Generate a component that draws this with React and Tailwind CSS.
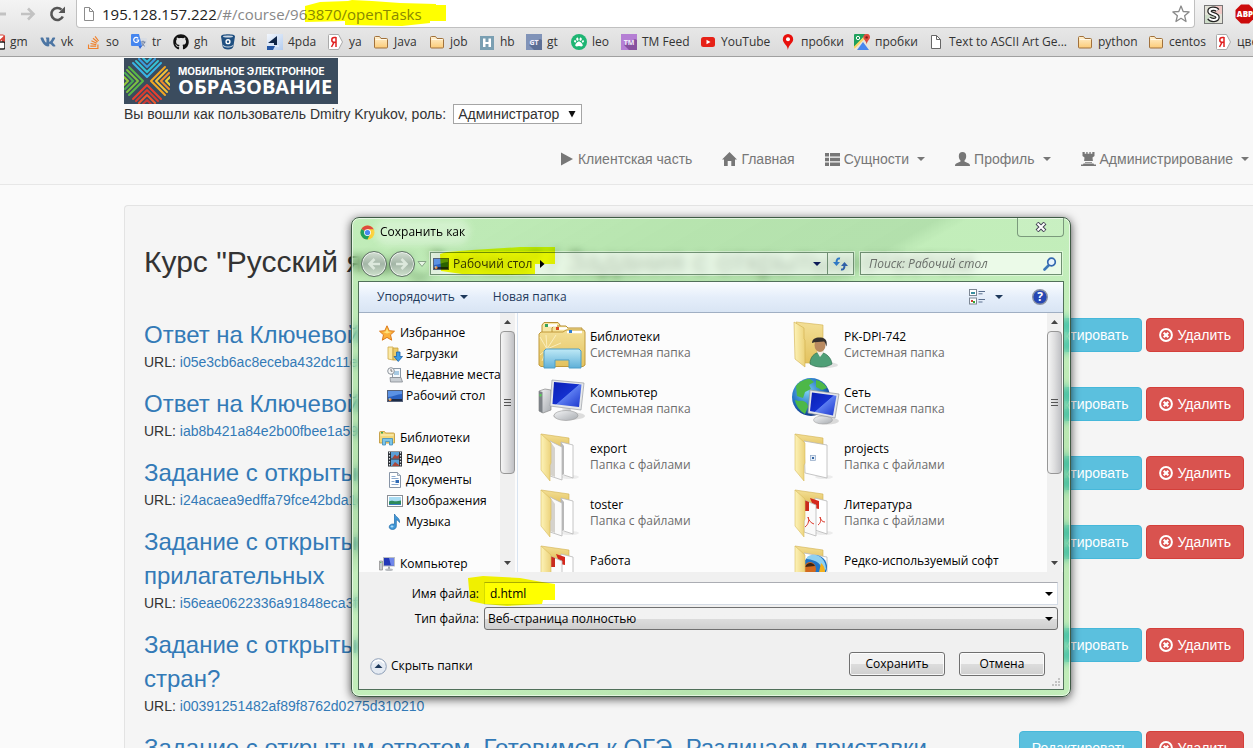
import React from 'react';
import { FaVk, FaStackOverflow, FaGithub, FaPaw } from 'react-icons/fa';

const UI = "font-['Open_Sans','Noto_Sans',sans-serif]";
const ARIAL = "font-['Liberation_Sans',Arial,sans-serif]";

/* ---------- bookmark icons ---------- */

const Gmail = () => (
  <svg width="16" height="16" viewBox="0 0 16 16">
    <rect x="0" y="1" width="15" height="11" rx="1" fill="#fff" stroke="#d8453a" />
    <path d="M0 1l8 7 8-7v11h-3V6L8 10 3 6v6H0z" fill="#d8453a" />
    <rect x="9" y="8" width="7" height="7" rx="1.5" fill="#fff" stroke="#222" strokeWidth="1.5" />
  </svg>
);

const Translate = () => (
  <svg width="16" height="16" viewBox="0 0 16 16">
    <path d="M6 4h9a1 1 0 0 1 1 1v9a1 1 0 0 1-1 1H9z" fill="#d9dde3" />
    <path d="M9.5 8h5M12 6.7V8m1.7 0c-.6 2-2 3.400-3.500 4.300M10.800 9c.7 1.500 1.800 2.500 3 3.200" stroke="#6c7ea0" fill="none" />
    <path d="M1 0h7l3 12H1a1 1 0 0 1-1-1V1a1 1 0 0 1 1-1z" fill="#4686ef" />
    <path d="M7.200 4.400A2.500 2.500 0 1 0 7.700 6H5.400" stroke="#fff" strokeWidth="1.200" fill="none" />
    <path d="M9 15l2-3H7.500z" fill="#3367d6" />
  </svg>
);

const Bucket = () => (
  <svg width="16" height="16" viewBox="0 0 16 16">
    <path d="M1 2.500C1 1 4 .3 8 .3s7 .7 7 2.200l-1.700 10.300c-.3 1.600-2.600 2.700-5.300 2.700s-5-1.100-5.300-2.700z" fill="#205081" />
    <ellipse cx="8" cy="2.600" rx="5" ry="1" fill="#c9d6e4" />
    <circle cx="8" cy="7.700" r="2.600" fill="#fff" />
    <circle cx="8" cy="7.700" r="1.200" fill="#205081" />
    <path d="M3 11.500c2.500 2 7.500 2 10 0" stroke="#fff" strokeWidth=".8" fill="none" />
  </svg>
);

const FourPda = () => (
  <svg width="16" height="16" viewBox="0 0 16 16">
    <defs>
      <linearGradient id="pda" x1="0" x2="1" y1="0" y2="1">
        <stop offset="0" stopColor="#f3f7fd" />
        <stop offset="1" stopColor="#b4cdf0" />
      </linearGradient>
    </defs>
    <rect width="16" height="16" fill="url(#pda)" />
    <path d="M10 2v9H7V9H1z" fill="#0f2547" />
    <path d="M0 11h12v2H0z" fill="#dbe8fa" />
    <path d="M0 12h8l-2 4H0z" fill="#2456a4" />
  </svg>
);

const Yandex = () => (
  <svg width="16" height="16" viewBox="0 0 16 16">
    <path d="M1.500.5h9l4 7.500-4 7.500h-9a1 1 0 0 1-1-1v-13a1 1 0 0 1 1-1z" fill="#fff" stroke="#aaa" />
    <path d="M8 3v10M8 3.500H6.200C3 3.500 3 8.300 6.200 8.300H8M6 8.300L3.500 13" fill="none" stroke="#e02020" strokeWidth="1.500" />
  </svg>
);

const Folder = () => (
  <svg width="16" height="16" viewBox="0 0 16 16">
    <defs>
      <linearGradient id="fold" x1="0" x2="0" y1="0" y2="1">
        <stop offset="0" stopColor="#fff0cf" />
        <stop offset="1" stopColor="#fccb77" />
      </linearGradient>
    </defs>
    <path d="M1.500 13V3.500a1 1 0 0 1 1-1h4l1.500 2h5.500a1 1 0 0 1 1 1V13a1 1 0 0 1-1 1h-11a1 1 0 0 1-1-1z" fill="url(#fold)" stroke="#a1713c" />
    <path d="M2.500 5.500h11" stroke="#fff8e6" />
  </svg>
);

const Habr = () => (
  <svg width="16" height="16" viewBox="0 0 16 16">
    <rect x="1" y="2" width="14" height="14" fill="#7a9fb2" />
    <path d="M4 4.500h2.500V8h3V4.500H12V13H9.500v-3h-3v3H4z" fill="#fff" />
  </svg>
);

const LetterTile = ({ text, front, back }) => (
  <svg width="16" height="16" viewBox="0 0 16 16">
    <rect width="16" height="16" fill={front} />
    <path d="M3 11l5 5h8V6l-2-1z" fill={back} />
    <text x="8" y="10.500" textAnchor="middle" fontSize="7" fontWeight="700" fontFamily="Open Sans" fill="#f2eefb">{text}</text>
  </svg>
);

const Leo = () => (
  <span className="flex size-4 items-center justify-center rounded-full bg-[#1eb573]">
    <FaPaw size={10} color="#fff" />
  </span>
);

const YouTube = () => (
  <svg width="16" height="16" viewBox="0 0 16 16">
    <rect x="1" y="3" width="14" height="10" rx="2.500" fill="#e62117" />
    <path d="M6.500 5.700v4.600l4-2.300z" fill="#fff" />
  </svg>
);

const Pin = () => (
  <svg width="16" height="16" viewBox="0 0 16 16">
    <path d="M8 0a5.200 5.200 0 0 1 5.200 5.200C13.200 9 9 10 7.800 16 7.800 11 2.800 9.500 2.800 5.200A5.200 5.200 0 0 1 8 0z" fill="#e8100c" />
    <circle cx="8" cy="5.200" r="2" fill="#fff" />
  </svg>
);

const Maps = () => (
  <svg width="16" height="16" viewBox="0 0 16 16">
    <rect width="16" height="16" rx="1" fill="#e9e5dc" />
    <path d="M0 1a1 1 0 0 1 1-1h11L0 14z" fill="#1fa15d" />
    <path d="M0 14L14 0" stroke="#fdd663" strokeWidth="2" />
    <path d="M3 16l6-8 6 8z" fill="#4a87ee" />
    <circle cx="4" cy="4" r="1.700" fill="none" stroke="#fff" />
    <path d="M12.500 0A3.300 3.300 0 0 1 16 3.300c0 2.400-2.700 3.200-3.300 7.200-.6-4-3.400-4.800-3.400-7.200A3.300 3.300 0 0 1 12.500 0z" fill="#dd4b3e" />
    <circle cx="12.600" cy="3.400" r="1.200" fill="#7c1f16" />
  </svg>
);

const Page = ({ stroke = '#666' }) => (
  <svg width="16" height="16" viewBox="0 0 16 16">
    <path d="M3.500 1.500h5l4 4v9h-9z" fill="#fff" stroke={stroke} />
    <path d="M8.500 1.500v4h4" fill="none" stroke={stroke} />
  </svg>
);

const bookmarks = [
  { label: 'gm', icon: <Gmail />, w: 'w-[51px]' },
  { label: 'vk', icon: <FaVk size={16} color="#4c75a3" />, w: 'w-[45px]' },
  { label: 'so', icon: <FaStackOverflow size={15} color="#f0812b" />, w: 'w-[46px]' },
  { label: 'tr', icon: <Translate />, w: 'w-[42px]' },
  { label: 'gh', icon: <FaGithub size={16} color="#111" />, w: 'w-[47px]' },
  { label: 'bit', icon: <Bucket />, w: 'w-[47px]' },
  { label: '4pda', icon: <FourPda />, w: 'w-[61px]' },
  { label: 'ya', icon: <Yandex />, w: 'w-[45px]' },
  { label: 'Java', icon: <Folder />, w: 'w-[56px]' },
  { label: 'job', icon: <Folder />, w: 'w-[50px]' },
  { label: 'hb', icon: <Habr />, w: 'w-[47px]' },
  { label: 'gt', icon: <LetterTile text="GT" front="#8093b8" back="#5d6f95" />, w: 'w-[45px]' },
  { label: 'leo', icon: <Leo />, w: 'w-[50px]' },
  { label: 'TM Feed', icon: <LetterTile text="TM" front="#b57fd4" back="#87519f" />, w: 'w-[79px]' },
  { label: 'YouTube', icon: <YouTube />, w: 'w-[80px]' },
  { label: 'пробки', icon: <Pin />, w: 'w-[74px]' },
  { label: 'пробки', icon: <Maps />, w: 'w-[74px]' },
  { label: 'Text to ASCII Art Ge...', icon: <Page />, w: 'w-[149px]' },
  { label: 'python', icon: <Folder />, w: 'w-[71px]' },
  { label: 'centos', icon: <Folder />, w: 'w-[68px]' },
  { label: 'цвета', icon: <Yandex />, w: 'w-[80px]' },
];

function BrowserChrome() {
  return (
    <div className={`${UI} shrink-0 border-b border-[#a0a0a0] bg-gradient-to-b from-[#f4f4f4] to-[#dadada]`}>
      <div className="flex h-7 items-stretch">
        <div className="flex w-19 shrink-0 items-center">
          <button type="button" aria-label="Назад" className="w-5">
            <svg width="20" height="16" viewBox="0 0 20 16"><path d="M-6 8H6" stroke="#c2c2c2" strokeWidth="3" /></svg>
          </button>
          <button type="button" aria-label="Вперёд" className="w-[29px]">
            <svg width="16" height="14" viewBox="0 0 16 14"><path d="M1 7h12M8 1.500L13.500 7 8 12.500" fill="none" stroke="#c2c2c2" strokeWidth="2.600" /></svg>
          </button>
          <button type="button" aria-label="Обновить" className="w-5">
            <svg width="18" height="16" viewBox="0 0 18 16">
              <path d="M13.800 10.500A6 6 0 1 1 12.500 3.600" fill="none" stroke="#555" strokeWidth="2.600" />
              <path d="M16 .5v6.500H9.500z" fill="#555" />
            </svg>
          </button>
        </div>
        <div className="flex min-w-0 flex-1 items-center rounded-b-sm border-x border-b border-[#c0c0c0] bg-white px-1">
          <Page stroke="#8c8c8c" />
          <div className="ml-[5px] flex-1 whitespace-nowrap text-[15px] leading-5 text-[#888]">
            <span className="text-[#222]">195.128.157.222</span>/#/course/963870/openTasks
          </div>
          <button type="button" aria-label="Добавить в закладки">
            <svg width="18" height="18" viewBox="0 0 18 18"><path d="M9 1l2.200 5.500 5.900.4-4.500 3.800 1.400 5.800L9 13.300l-5 3.200 1.400-5.800L.9 6.900l5.900-.4z" fill="#fff" stroke="#8a8a8a" strokeWidth="1.300" strokeLinejoin="round" /></svg>
          </button>
        </div>
        <div className="flex w-[58px] shrink-0 items-center gap-3 overflow-hidden pl-[9px]">
          <svg className="shrink-0" width="19" height="19" viewBox="0 0 19 19">
            <rect x=".5" y=".5" width="18" height="18" fill="#e3e3d8" stroke="#777" />
            <path d="M10 1h8v8h-8z" fill="#f0c9c6" />
            <path d="M1 10h8v8H1z" fill="#cddcc8" />
            <path d="M13.500 5.500C12 3 5.500 3 5.500 6.300c0 3.400 8 2.400 8 5.900 0 3.300-6.500 3.600-8.500.8" fill="none" stroke="#222" strokeWidth="4.500" />
            <path d="M13.500 5.500C12 3 5.500 3 5.500 6.300c0 3.400 8 2.400 8 5.900 0 3.300-6.500 3.600-8.500.8" fill="none" stroke="#fff" strokeWidth="2" />
          </svg>
          <svg className="shrink-0" width="20" height="20" viewBox="0 0 20 20">
            <path d="M6 .5h8L19.500 6v8L14 19.500H6L.5 14V6z" fill="#cc0b0b" />
            <text x="10" y="13" textAnchor="middle" fontSize="8" fontWeight="800" fontFamily="Open Sans" fill="#fff">ABP</text>
          </svg>
        </div>
      </div>
      <div className="-ml-[11px] flex h-7 items-center overflow-hidden text-[12px] leading-4 text-[#333]">
        {bookmarks.map((b, i) => (
          <a key={i} href="#" className={`${b.w} flex shrink-0 items-center gap-[5px] whitespace-nowrap`}>
            <span className="flex w-4 shrink-0 justify-center">{b.icon}</span>
            {b.label}
          </a>
        ))}
      </div>
    </div>
  );
}

/* ---------- page header ---------- */

const LogoMark = () => {
  const halves = [14, 11, 8, 4];
  const sides = [
    { r: 0, c: ['#38b6e8', '#34c3d6', '#3a9fe0', '#35b8d8'] },
    { r: 90, c: ['#f5a623', '#f3c13a', '#f08c2e', '#e8d23a'] },
    { r: 180, c: ['#e8402f', '#d83a30', '#f0582e', '#c93a36'] },
    { r: 270, c: ['#58b848', '#7cc242', '#4cae50', '#93c83d'] },
  ];
  return (
    <svg className="shrink-0" width="46" height="46" viewBox="0 0 46 46">
      {sides.map((s) => (
        <g key={s.r} transform={`rotate(${s.r} 23 23)`} fill="none" strokeWidth="2" strokeLinejoin="round" strokeLinecap="round">
          {halves.map((half, n) => {
            const y = 19 - n * 5;
            return <path key={n} d={`M${23 - half} ${y - half}L23 ${y}L${23 + half} ${y - half}`} stroke={s.c[n]} />;
          })}
        </g>
      ))}
    </svg>
  );
};

const Caret = () => (
  <svg className="ml-1" width="8" height="4" viewBox="0 0 8 4"><path d="M0 0h8L4 4z" fill="#777" /></svg>
);

const navItems = [
  { label: 'Клиентская часть', icon: <svg width="14" height="14" viewBox="0 0 14 14"><path d="M1 .5l12 6.500-12 6.500z" fill="#777" /></svg> },
  { label: 'Главная', icon: <svg width="15" height="14" viewBox="0 0 15 14"><path d="M7.500 0L15 7.500h-2V14H9.300V9H5.700v5H2V7.500H0z" fill="#777" /></svg> },
  { label: 'Сущности', caret: true, icon: <svg width="15" height="13" viewBox="0 0 15 13"><path d="M0 0h4v3.500H0zM5 0h10v3.500H5zM0 4.700h4v3.500H0zM5 4.700h10v3.500H5zM0 9.400h4v3.500H0zM5 9.400h10v3.500H5z" fill="#777" /></svg> },
  { label: 'Профиль', caret: true, icon: <svg width="15" height="14" viewBox="0 0 15 14"><path d="M7.500 0c2.300 0 3.700 1.600 3.700 4 0 1.900-.7 3.600-1.700 4.600v1l4.300 1.800c.9.400 1.200 1.400 1.200 2.600H0c0-1.200.3-2.200 1.200-2.600l4.300-1.800v-1C4.500 7.600 3.800 5.900 3.800 4 3.800 1.600 5.200 0 7.500 0z" fill="#777" /></svg> },
  { label: 'Администрирование', caret: true, icon: <svg width="15" height="14" viewBox="0 0 15 14"><path d="M1.500 0h2.200v1.800h1.600V0h1.300v1.800h1.800V0h1.300v1.800h1.600V0h2.200v4l-2 1.500.4 3.500H3.100l.4-3.500-2-1.500zM4 10h7v.8H4zM2.500 11.500h10l.5 1h2V14H0v-1.500h2z" fill="#777" /></svg> },
];

function SiteHeader() {
  return (
    <header className="shrink-0 border-b border-[#e7e7e7] bg-[#f8f8f8] pl-[124px]">
      <div className="pt-px">
        <a href="#" className="flex h-[46px] w-[214px] items-center bg-[#3b4c5e] text-white">
          <LogoMark />
          <span className="ml-2 flex flex-col whitespace-nowrap font-bold">
            <span className="font-['Inter',sans-serif] text-[10px] leading-3">МОБИЛЬНОЕ ЭЛЕКТРОННОЕ</span>
            <span className="font-['Open_Sans',sans-serif] text-[20px] leading-5">ОБРАЗОВАНИЕ</span>
          </span>
        </a>
      </div>
      <div className="flex h-5 items-center gap-[7px] text-[14px] leading-5 text-[#333]">
        <label htmlFor="role">Вы вошли как пользователь Dmitry Kryukov, роль:</label>
        <span className="relative flex">
          <select id="role" className="h-5 w-[129px] appearance-none border border-[#a5a5a5] bg-white pl-1 text-[14px] leading-4 text-[#333]">
            <option>Администратор</option>
          </select>
          <svg className="pointer-events-none absolute right-1.5 top-1.5" width="8" height="8" viewBox="0 0 8 8"><path d="M.5 1h7L4 7.500z" fill="#111" /></svg>
        </span>
      </div>
      <nav className="flex justify-end gap-[30px] pb-[15px] pr-1 pt-[25px] text-[14px] leading-5 text-[#777]">
        {navItems.map((n) => (
          <a key={n.label} href="#" className="flex items-center gap-1 whitespace-nowrap">
            {n.icon}
            {n.label}
            {n.caret && <Caret />}
          </a>
        ))}
      </nav>
    </header>
  );
}

/* ---------- task list ---------- */

const tasks = [
  { title: 'Ответ на Ключевой вопрос', url: 'i05e3cb6ac8eceba432dc11e7a09b4c5f' },
  { title: 'Ответ на Ключевой вопрос', url: 'iab8b421a84e2b00fbee1a59c07d3e2f1' },
  { title: 'Задание с открытым ответом', url: 'i24acaea9edffa79fce42bda1c8e03b67' },
  { title: 'Задание с открытым ответом. Готовимся к ОГЭ. Правописание\nприлагательных', url: 'i56eae0622336a91848eca3f1d07b92c5' },
  { title: 'Задание с открытым ответом. Что я знаю о языках разных\nстран?', url: 'i00391251482af89f8762d0275d310210' },
  { title: 'Задание с открытым ответом. Готовимся к ОГЭ. Различаем приставки', url: 'i7be10c52d4f98a6310cde5b82f4a97d3' },
];

const RemoveCircle = () => (
  <svg width="14" height="14" viewBox="0 0 14 14" fill="none" stroke="#fff">
    <circle cx="7" cy="7" r="5.900" strokeWidth="2" />
    <path d="M4.700 4.700l4.600 4.600M9.300 4.700L4.700 9.300" strokeWidth="2.200" />
  </svg>
);

function TaskList() {
  return (
    <main className="mt-5 ml-[124px] flex-1 rounded-l border border-r-0 border-[#e3e3e3] bg-[#f5f5f5] pb-5 pl-[19px] pr-[9px] pt-[39px]">
      <h2 className="whitespace-nowrap text-[30px] leading-[33px] text-[#333]">
        Курс "Русский язык_7 класс" / Задания с открытым ответом
      </h2>
      <ul className="mt-10 flex flex-col gap-[15px]">
        {tasks.map((t) => (
          <li key={t.url} className="flex items-start">
            <div className="min-w-0 flex-1">
              <a href="#" className="block whitespace-pre-line text-[24px] leading-[34px] text-[#337ab7]">{t.title}</a>
              <div className="text-[14px] leading-5 text-[#333]">
                URL: <a href="#" className="text-[#337ab7]">{t.url}</a>
              </div>
            </div>
            <div className="flex shrink-0 gap-1 text-[14px] leading-5 text-white">
              <button type="button" className="h-[34px] rounded border border-[#46b8da] bg-[#5bc0de] px-3">Редактировать</button>
              <button type="button" className="flex h-[34px] items-center gap-[5px] rounded border border-[#d43f3a] bg-[#d9534f] px-3">
                <RemoveCircle />Удалить
              </button>
            </div>
          </li>
        ))}
      </ul>
    </main>
  );
}

/* ---------- dialog icons ---------- */

const ChromeLogo = () => (
  <svg width="15" height="15" viewBox="0 0 16 16">
    <circle cx="8" cy="8" r="7.500" fill="#fbd035" />
    <path d="M8 8L1.500 4.250A7.500 7.500 0 0 1 14.500 4.250L15 4.500H8z" fill="#dd4b3e" />
    <path d="M8 8L1.500 4.250A7.500 7.500 0 0 0 8 15.500L10.500 10z" fill="#1fa15d" />
    <circle cx="8" cy="8" r="3.600" fill="#fff" />
    <circle cx="8" cy="8" r="2.800" fill="#4a87ee" />
  </svg>
);

const Monitor = () => (
  <svg width="16" height="16" viewBox="0 0 16 16">
    <rect x=".5" y="2.500" width="15" height="11" fill="#2a62c2" stroke="#56627a" />
    <path d="M1 3h14v3C10 6 6 9 1 9z" fill="#5b92e4" />
    <rect x="1" y="11" width="14" height="2" fill="#1c2b47" />
    <circle cx="3" cy="11.500" r="1.500" fill="#f08a3a" />
    <circle cx="2.500" cy="11" r=".8" fill="#7bd3ff" />
  </svg>
);

const Star = () => (
  <svg width="16" height="16" viewBox="0 0 16 16"><path d="M8 .8l2.200 4.900 5.300.5-4 3.600 1.200 5.400L8 12.400l-4.700 2.800 1.200-5.400-4-3.600 5.300-.5z" fill="#fbb03b" stroke="#dc7a1c" strokeLinejoin="round" /><path d="M8 3l1.300 3.500 3 .4L8 8.500 4 7l2.700-.5z" fill="#ffe27a" /></svg>
);

const Downloads = () => (
  <svg width="16" height="16" viewBox="0 0 16 16">
    <path d="M1 1h5v13l-5-1z" fill="#fbe9a6" stroke="#cfa94a" strokeWidth=".8" />
    <path d="M6 2h5v12H6z" fill="#eccb68" stroke="#c79f3d" strokeWidth=".8" />
    <path d="M9.500 6h3.500v4.500h2.500L11.250 15.500 7 10.500h2.500z" fill="#3d9be6" stroke="#1d62a8" strokeWidth=".8" />
  </svg>
);

const Recent = () => (
  <svg width="16" height="16" viewBox="0 0 16 16">
    <rect x="5.500" y="1.500" width="8" height="9" fill="#f4f8fb" stroke="#8b98a5" />
    <path d="M7 5h5M7 7h5" stroke="#5a9ac8" />
    <path d="M3 10.500h11l1.500 4.500h-12z" fill="#c9ced3" stroke="#868c93" strokeWidth=".8" />
    <circle cx="4" cy="4" r="3.300" fill="#f5f6f7" stroke="#8d949b" />
    <path d="M4 2v2.200h1.500" fill="none" stroke="#555" strokeWidth=".8" />
  </svg>
);

const LibrarySmall = () => (
  <svg width="16" height="16" viewBox="0 0 16 16">
    <path d="M.5 13V2.500a1 1 0 0 1 1-1h4l1 1.500h8a1 1 0 0 1 1 1v9z" fill="#f2d679" stroke="#c29b3f" strokeWidth=".9" />
    <path d="M1.500 5h13" stroke="#fff3c4" />
    <rect x="2" y="2" width="2" height="1.500" fill="#3aa655" />
    <path d="M3.500 15V8.500h10V15h-3v-3.500h-4V15z" fill="#7cc4e8" stroke="#3f8dbd" strokeWidth=".8" />
  </svg>
);

const Video = () => (
  <svg width="16" height="16" viewBox="0 0 16 16">
    <rect x="1" y=".5" width="14" height="15" fill="#2b2f35" />
    <rect x="4" y="1" width="8" height="6.500" fill="#5a9fd6" />
    <rect x="4" y="8.500" width="8" height="6.500" fill="#5a9fd6" />
    <path d="M5 7.500l3-4 2 2 2-2v4zM5 15l3-4 4 3v1z" fill="#a8473a" />
    <path d="M2.500 1v14M13.500 1v14" stroke="#dfe3e8" strokeWidth="1.200" strokeDasharray="1.500 1.500" />
  </svg>
);

const Doc = () => (
  <svg width="16" height="16" viewBox="0 0 16 16">
    <path d="M2.500.5h8l3 3v12h-11z" fill="#fff" stroke="#8794a6" />
    <path d="M10.500.5v3h3" fill="#dbe4ee" stroke="#8794a6" strokeWidth=".8" />
    <path d="M4.500 4.500h4M4.500 6.500h7M4.500 12.500h7M4.500 9.500h3" stroke="#7fa0c8" strokeWidth=".9" />
    <rect x="8.500" y="8" width="3.500" height="3" fill="#2f6ab5" />
  </svg>
);

const Picture = () => (
  <svg width="16" height="16" viewBox="0 0 16 16">
    <rect x=".5" y="2.500" width="15" height="11" fill="#fff" stroke="#8a8f96" />
    <rect x="2" y="4" width="12" height="8" fill="#a9dcf3" />
    <path d="M2 8.500c3-2 5 1 12-1V12H2z" fill="#2d8a5c" />
    <path d="M2 11h12v1H2z" fill="#3a7ec2" />
  </svg>
);

const Music = () => (
  <svg width="16" height="16" viewBox="0 0 16 16">
    <path d="M7.500 0c1 3 5.500 3.500 5 8.500-1-2-2.500-2.500-3.200-2.700v6.400c0 2-1.700 3.300-3.800 3.300-1.900 0-3.300-1-3.300-2.500 0-1.700 1.700-3 3.800-3 .6 0 1.100.1 1.500.2z" fill="#3f97d8" stroke="#1f6aa8" strokeWidth=".7" />
    <ellipse cx="5" cy="12.500" rx="1.500" ry="1" fill="#a9dcfa" />
  </svg>
);

const ComputerSmall = () => (
  <svg width="16" height="16" viewBox="0 0 16 16">
    <path d="M.5 5h3v9h-3z" fill="#c6c9cd" stroke="#888" strokeWidth=".7" />
    <rect x="1.300" y="6" width="1" height="1" fill="#3cbf3c" />
    <rect x="4.500" y="1.500" width="11" height="8.500" fill="#2338b8" stroke="#b9bdc3" />
    <path d="M10 2h5v7.500h-3z" fill="#6f86ea" />
    <path d="M9 10.500h2V13H9z" fill="#a5a9ae" />
    <ellipse cx="10" cy="13.800" rx="4" ry="1.200" fill="#b9bcc0" />
  </svg>
);

const tree = [
  { label: 'Избранное', icon: <Star /> },
  { label: 'Загрузки', icon: <Downloads />, child: true },
  { label: 'Недавние места', icon: <Recent />, child: true },
  { label: 'Рабочий стол', icon: <Monitor />, child: true },
  null,
  { label: 'Библиотеки', icon: <LibrarySmall /> },
  { label: 'Видео', icon: <Video />, child: true },
  { label: 'Документы', icon: <Doc />, child: true },
  { label: 'Изображения', icon: <Picture />, child: true },
  { label: 'Музыка', icon: <Music />, child: true },
  null,
  { label: 'Компьютер', icon: <ComputerSmall /> },
];

const Defs = () => (
  <svg width="0" height="0" className="absolute">
    <defs>
      <linearGradient id="flap" x1="0" x2="1" y1="0" y2="0">
        <stop offset="0" stopColor="#fdf3b8" />
        <stop offset="1" stopColor="#ecd27a" />
      </linearGradient>
      <linearGradient id="back" x1="0" x2="0" y1="0" y2="1">
        <stop offset="0" stopColor="#f3df96" />
        <stop offset="1" stopColor="#e3c25e" />
      </linearGradient>
      <linearGradient id="screen" x1="0" x2="1" y1="0" y2="1">
        <stop offset="0" stopColor="#0a1fb4" />
        <stop offset=".5" stopColor="#1430cf" />
        <stop offset=".52" stopColor="#5b7cf0" />
        <stop offset="1" stopColor="#1a35cc" />
      </linearGradient>
      <linearGradient id="metal" x1="0" x2="1" y1="0" y2="1">
        <stop offset="0" stopColor="#f4f5f6" />
        <stop offset="1" stopColor="#a7abb0" />
      </linearGradient>
      <linearGradient id="glass" x1="0" x2="0" y1="0" y2="1">
        <stop offset="0" stopColor="#bfe9f6" />
        <stop offset="1" stopColor="#5fb0d8" />
      </linearGradient>
      <radialGradient id="globe" cx=".4" cy=".35" r=".7">
        <stop offset="0" stopColor="#7fd0f5" />
        <stop offset=".6" stopColor="#2373c4" />
        <stop offset="1" stopColor="#0f2f7c" />
      </radialGradient>
    </defs>
  </svg>
);

const Libraries = () => (
  <svg width="48" height="48" viewBox="0 0 48 48">
    <path d="M4 12V4l2-2.500h14L22 4v8z" fill="#f7e7a5" stroke="#b99134" />
    <path d="M14 14V7l2-2h12l2 2h14v8z" fill="#f5e29a" stroke="#b99134" />
    <path d="M10 4.500h9M21 7.500h8" stroke="#fff" strokeWidth="2.500" />
    <rect x="7" y="3" width="3" height="3" fill="#35a35a" />
    <rect x="18" y="6" width="3" height="3" fill="#d8481f" />
    <path d="M1 44V13l2-2h22l3-2h18l1 2v33l-2 1.500H3z" fill="url(#back)" stroke="#c19a3b" />
    <path d="M29 11h15" stroke="#fff" strokeWidth="2.500" />
    <rect x="31" y="9" width="3" height="3" fill="#2f7fd0" />
    <path d="M9 28L2 16M9 28L8 14M9 28l9-14M9 28l14-6M9 28L2 34M9 28l-5 12" stroke="#fff8d6" strokeWidth=".7" />
    <path d="M6 47V30l2-2h33l2 2v17H31v-8H17v8z" fill="url(#glass)" stroke="#4f9fc8" />
  </svg>
);

const Computer = () => (
  <svg width="48" height="48" viewBox="0 0 48 48">
    <path d="M1 14l6-2 6 1v20l-8 3-4-2z" fill="url(#metal)" stroke="#888" strokeWidth=".7" />
    <path d="M1 14l3.500 1v21L1 34z" fill="#7d8287" />
    <rect x="1.500" y="17" width="2" height="2.500" fill="#54d054" />
    <ellipse cx="31" cy="39" rx="16" ry="4" fill="#dcdcdc" />
    <path d="M24 30h8l2 8h-9z" fill="url(#metal)" />
    <ellipse cx="28" cy="38.500" rx="12" ry="5" fill="url(#metal)" stroke="#999" strokeWidth=".6" />
    <path d="M14 3l32 3-3 27-31-4z" fill="#e6e8ea" stroke="#9a9ea3" strokeWidth=".7" />
    <path d="M16 5l27.500 2.600L41 30 14.500 27z" fill="url(#screen)" />
  </svg>
);

const UserFolder = () => (
  <svg width="48" height="48" viewBox="0 0 48 48">
    <ellipse cx="34" cy="44" rx="12" ry="3" fill="#e0e0e0" />
    <path d="M4 1l27 3v38H12z" fill="url(#back)" stroke="#d2b04f" strokeWidth=".6" />
    <path d="M2 1l10 6v11l1 1v27L3 38z" fill="url(#flap)" stroke="#d2b04f" strokeWidth=".6" />
    <path d="M18 43c0-7 4-11 10-12 6 1 11 5 12 12-6 4-16 4-22 0z" fill="#4f9f77" stroke="#2f6f50" strokeWidth=".7" />
    <path d="M25 31l3 5 4-5v-4h-6z" fill="#f2ede6" />
    <ellipse cx="28" cy="24" rx="5.500" ry="7" fill="#b98a60" />
    <path d="M20 22c0-5 5-6 9-5.500 5 .5 6.500 4 5.500 9-1-2-1-4-2.500-5-4 .5-9 0-12 1.500z" fill="#35302d" />
  </svg>
);

const Network = () => (
  <svg width="48" height="48" viewBox="0 0 48 48">
    <circle cx="19" cy="20" r="19" fill="url(#globe)" />
    <path d="M4 9c4-5 9-7 14-7l4 3-5 3 2 4-6 3-2 6-6-2zM24 3c5 1 9 4 11 8l-5 2-6-3zM7 24c5-1 9 2 9 6l-3 7C8 34 4 29 3 23z" fill="#4db848" />
    <ellipse cx="35" cy="44" rx="12" ry="3.500" fill="#dadada" />
    <path d="M28 36h7l1 7h-9z" fill="url(#metal)" />
    <ellipse cx="31" cy="43" rx="9.500" ry="4" fill="url(#metal)" stroke="#999" strokeWidth=".5" />
    <path d="M18 13l29 4-4 24-27-5z" fill="#e3e5e8" stroke="#93979c" strokeWidth=".7" />
    <path d="M20 15.500l24.500 3.300L41 38.500 18 34z" fill="url(#screen)" />
  </svg>
);

const FileFolder = ({ children }) => (
  <svg width="48" height="48" viewBox="0 0 48 48">
    <ellipse cx="32" cy="44" rx="9" ry="2" fill="#ececec" />
    <path d="M3 1l28 4v10H12z" fill="url(#back)" stroke="#d2b04f" strokeWidth=".6" />
    {children}
    <path d="M3 1l10 9v20l-1 2v16L3 37z" fill="url(#flap)" stroke="#d9bc5e" strokeWidth=".6" />
  </svg>
);

const Sheets = () => (
  <>
    <path d="M23 9l12 3v33l-12-4z" fill="#fff" stroke="#b8b8b8" strokeWidth=".8" />
    <path d="M23 9l3 4v28h-3z" fill="#b9b9b9" />
    <path d="M12 8l12 6v33l-12-4z" fill="#fafafa" stroke="#b8b8b8" strokeWidth=".8" />
    <path d="M12 8l5 7v29l-5-2z" fill="#d5d2cc" />
  </>
);

const OneSheet = () => (
  <>
    <path d="M12 8l23 4v33l-22-5z" fill="#fff" stroke="#b8b8b8" strokeWidth=".8" />
    <rect x="18.500" y="22.500" width="5" height="5" fill="#e5edf7" stroke="#8ea6c4" strokeWidth=".7" />
    <path d="M20 24h2v2h-2z" fill="#3768a5" />
  </>
);

const RedSheets = () => (
  <>
    <path d="M23 9l12 3v33l-12-4z" fill="#fff" stroke="#b8b8b8" strokeWidth=".8" />
    <path d="M18 9l9 3v8l-5-1z" fill="#d5281c" />
    <path d="M12 11l12 5v31l-12-4z" fill="#fafafa" stroke="#b8b8b8" strokeWidth=".8" />
    <path d="M12 11l5 2v9h-5z" fill="#c92a1d" />
    <path d="M13 38c4-3 4-7 3-10 1 4 3 6 6 7M26 36c3-2 3-5 2-8 1 3 2 5 5 5" fill="none" stroke="#dc3a2c" />
  </>
);

const AppSheets = () => (
  <>
    <path d="M12 8l23 4v33l-22-5z" fill="#fff" stroke="#b8b8b8" strokeWidth=".8" />
    <circle cx="23" cy="22" r="12" fill="#1f74c7" />
    <path d="M15 12c8-6 19 0 19 12l-3 4c0-8-6-13-16-14z" fill="#8fd0f0" />
    <path d="M29 18c4 3 5 9 3 14h-6z" fill="#f3b01c" />
    <ellipse cx="18" cy="24" rx="6" ry="7" fill="#d2691e" />
    <path d="M13 22c2-5 8-5 10-1z" fill="#3c2415" />
  </>
);

const files = [
  { name: 'Библиотеки', sub: 'Системная папка', icon: <Libraries /> },
  { name: 'PK-DPI-742', sub: 'Системная папка', icon: <UserFolder /> },
  { name: 'Компьютер', sub: 'Системная папка', icon: <Computer /> },
  { name: 'Сеть', sub: 'Системная папка', icon: <Network /> },
  { name: 'export', sub: 'Папка с файлами', icon: <FileFolder><Sheets /></FileFolder> },
  { name: 'projects', sub: 'Папка с файлами', icon: <FileFolder><OneSheet /></FileFolder> },
  { name: 'toster', sub: 'Папка с файлами', icon: <FileFolder><Sheets /></FileFolder> },
  { name: 'Литература', sub: 'Папка с файлами', icon: <FileFolder><RedSheets /></FileFolder> },
  { name: 'Работа', sub: '', icon: <FileFolder><RedSheets /></FileFolder> },
  { name: 'Редко-используемый софт', sub: '', icon: <FileFolder><AppSheets /></FileFolder> },
];

const Down = ({ color = '#000' }) => (
  <svg className="shrink-0" width="8" height="4" viewBox="0 0 8 4"><path d="M0 0h8L4 4z" fill={color} /></svg>
);

function ScrollBar() {
  return (
    <div className="flex w-[15px] shrink-0 flex-col items-center bg-[#f0f0f0]">
      <div className="flex h-[18px] items-center"><svg width="7" height="4" viewBox="0 0 7 4"><path d="M0 4h7L3.500 0z" fill="#444" /></svg></div>
      <div className="flex h-[143px] w-full items-center justify-center rounded-sm border border-[#979797] bg-gradient-to-r from-[#f5f5f5] via-[#dededf] to-[#c0c1c5]">
        <svg width="7" height="8" viewBox="0 0 7 8"><path d="M0 .5h7M0 3.500h7M0 6.500h7" stroke="#555" /></svg>
      </div>
      <div className="flex-1" />
      <div className="flex h-[18px] items-center"><svg width="7" height="4" viewBox="0 0 7 4"><path d="M0 0h7L3.500 4z" fill="#444" /></svg></div>
    </div>
  );
}

const RoundArrow = ({ label, flip }) => (
  <button type="button" aria-label={label} className="size-[26px] rounded-full border border-[#5d6f63] bg-gradient-to-b from-[#d3dfd3] via-[#a3b5a6] to-[#cfe2cd] p-1 shadow-[inset_0_0_0_1px_rgba(255,255,255,0.7)]">
    <svg width="16" height="16" viewBox="0 0 16 16" className={flip ? 'rotate-180' : ''}>
      <path d="M14 8H4M8.500 3L3.500 8l5 5" fill="none" stroke="#dce8dc" strokeWidth="2.600" />
    </svg>
  </button>
);

const winButton = 'h-6 rounded-[3px] border border-[#707070] bg-gradient-to-b from-[#f2f2f2] from-50% via-[#dddddd] via-50% to-[#cfcfcf] shadow-[inset_0_0_0_1px_rgba(255,255,255,0.8)]';

function SaveDialog() {
  return (
    <section
      role="dialog"
      aria-label="Сохранить как"
      className={`${UI} absolute left-[351px] top-[217px] flex h-[480px] w-[720px] flex-col overflow-hidden rounded-lg border border-[#3f5a45] bg-[linear-gradient(150deg,rgba(45,217,13,0.25)_0%,rgba(40,190,13,0.3)_22%,rgba(40,180,20,0.32)_38%,rgba(45,217,13,0.25)_40%,rgba(45,217,13,0.25)_60%,rgba(40,190,13,0.3)_75%,rgba(45,217,13,0.25)_100%)] px-[6px] pb-[6px] text-[12px] leading-4 text-black shadow-[inset_0_0_0_1px_rgba(255,255,255,0.6),0_2px_10px_rgba(0,0,0,0.7)] backdrop-blur-[4px]`}
    >
      <Defs />
      <div className="flex h-[29px] shrink-0 items-start justify-between">
        <div className="flex items-center gap-[5px] pl-[2px] pt-[6px]">
          <ChromeLogo />
          <h1 className="rounded-full bg-white/30 shadow-[0_0_6px_5px_rgba(255,255,255,0.3)]">Сохранить как</h1>
        </div>
        <button type="button" aria-label="Закрыть" className="flex h-[19px] w-[47px] items-center justify-center rounded-b-[4px] border border-t-0 border-[#7b9a7c] bg-white/10">
          <svg width="12" height="10" viewBox="0 0 12 10">
            <path d="M2 1l8 8M10 1L2 9" stroke="#445" strokeWidth="4" />
            <path d="M2.500 1.500l7 7M9.500 1.500l-7 7" stroke="#fff" strokeWidth="2" />
          </svg>
        </button>
      </div>

      <div className="flex h-[34px] shrink-0 items-center pb-px pl-[3px]">
        <RoundArrow label="Назад" />
        <span className="w-0.5" />
        <RoundArrow label="Вперёд" flip />
        <svg className="mx-[2px]" width="10" height="8" viewBox="0 0 10 8"><path d="M1 1.500h8L5 6.500z" fill="#e8f6e5" stroke="#88a488" /></svg>
        <div className="ml-px flex h-[23px] flex-1 items-stretch border border-[#6f8f72] bg-white/65 shadow-[0_0_0_1px_rgba(255,255,255,0.4)]">
          <div className="flex flex-1 items-center pl-[2px]">
            <Monitor />
            <span className="ml-1 text-[#333]">Рабочий стол</span>
            <svg className="ml-2" width="5" height="8" viewBox="0 0 5 8"><path d="M0 0v8l4.500-4z" fill="#000" /></svg>
          </div>
          <button type="button" aria-label="Предыдущие расположения" className="px-[6px]"><Down color="#0d1a57" /></button>
          <button type="button" aria-label="Обновить" className="flex w-[26px] items-center justify-center border-l border-[#6f8f72]">
            <svg width="15" height="14" viewBox="0 0 15 14">
              <path d="M7 1.500C4.500 1 3.500 2.500 3.500 6" fill="none" stroke="#2f78c4" strokeWidth="2" />
              <path d="M0 5h7L3.500 9z" fill="#2f78c4" />
              <path d="M8 12.500c2.500.5 3.500-1 3.500-4.500" fill="none" stroke="#2f5fa8" strokeWidth="2" />
              <path d="M8 9h7l-3.500-4z" fill="#2f5fa8" />
            </svg>
          </button>
        </div>
        <label className="ml-[6px] mr-[2px] flex h-[23px] w-[202px] items-center border border-[#6f8f72] bg-white/65 pr-1 shadow-[0_0_0_1px_rgba(255,255,255,0.4)]">
          <input aria-label="Поиск" placeholder="Поиск: Рабочий стол" className="min-w-0 flex-1 bg-transparent pl-2 italic outline-none placeholder:text-[#6a6f6a]" />
          <svg width="14" height="14" viewBox="0 0 14 14"><path d="M6 8L1.500 12.500" stroke="#3c78b8" strokeWidth="2.600" strokeLinecap="round" /><circle cx="8.500" cy="5" r="3.800" fill="#e8f4fc" stroke="#3468b0" strokeWidth="1.700" /></svg>
        </label>
      </div>

      <div className="flex min-h-0 flex-1 flex-col border border-[#51705a] bg-[#f0f0f0]">
        <div className="flex h-[31px] shrink-0 items-center border-b border-[#a0afc3] bg-gradient-to-b from-[#fbfdff] via-[#e5eefa] via-50% to-[#d9e5f4] pl-[18px] pr-[15px] text-[#1e395b]">
          <button type="button" className="flex items-center gap-[5px]">Упорядочить <Down color="#1e395b" /></button>
          <button type="button" className="ml-[25px]">Новая папка</button>
          <span className="flex-1" />
          <button type="button" aria-label="Вид" className="flex items-center gap-[9px]">
            <svg width="17" height="16" viewBox="0 0 17 16">
              <rect x=".5" y=".5" width="7" height="6" fill="#fff" stroke="#7d8794" />
              <path d="M2 3h4v2H2z" fill="#3a8fa0" />
              <rect x=".5" y="9" width="7" height="6" fill="#fff" stroke="#7d8794" />
              <path d="M2 11h2v2H2z" fill="#c43" /><path d="M4 12h2v2H4z" fill="#3a3" />
              <path d="M9.500 2.500H16M9.500 4.800h4M9.500 10.500H16M9.500 13h4" stroke="#5b6f8d" />
            </svg>
            <Down color="#1e395b" />
          </button>
          <button type="button" aria-label="Справка" className="ml-[29px]">
            <svg width="16" height="16" viewBox="0 0 16 16">
              <circle cx="8" cy="8" r="7.300" fill="#2647b4" stroke="#8b93a3" strokeWidth="1.400" />
              <text x="8" y="12.200" textAnchor="middle" fontSize="12" fontWeight="700" fontFamily="Open Sans" fill="#fff">?</text>
            </svg>
          </button>
        </div>

        <div className="flex h-[259px] shrink-0 overflow-hidden bg-[#fcfcfc] pr-px">
          <ul className="w-[141px] shrink-0 pt-[9px]">
            {tree.map((t, i) => (
              <li key={i} className={`flex h-[21px] items-center whitespace-nowrap ${t && t.child ? 'gap-[3px] pl-[28px]' : 'gap-[5px] pl-[20px]'}`}>
                {t && <span className="shrink-0">{t.icon}</span>}
                {t && <span>{t.label}</span>}
              </li>
            ))}
          </ul>
          <ScrollBar />
          <div className="ml-[2px] w-px bg-[#d9e4f1]" />
          <ul className="grid flex-1 auto-rows-[56px] grid-cols-[254px_1fr] pl-5 pt-1">
            {files.map((f) => (
              <li key={f.name} className="flex h-14 items-center gap-1 whitespace-nowrap">
                {f.icon}
                <div>
                  <div>{f.name}</div>
                  <div className="h-4 text-[#6d6d6d]">{f.sub}</div>
                </div>
              </li>
            ))}
          </ul>
          <ScrollBar />
        </div>

        <div className="flex flex-1 flex-col pl-[11px] pr-[5px] pt-[10px]">
          <div className="grid grid-cols-[109px_1fr] items-center gap-x-[5px] gap-y-[2px]">
            <label htmlFor="fname" className="text-right">Имя файла:</label>
            <span className="flex h-[23px] items-center border border-[#d5dce6] border-t-[#abadb3] bg-white pr-1">
              <input id="fname" defaultValue="d.html" className="min-w-0 flex-1 bg-transparent pl-[5px] outline-none" />
              <Down />
            </span>
            <label htmlFor="ftype" className="text-right">Тип файла:</label>
            <span className="flex h-[23px] items-center rounded-[3px] border border-[#707070] bg-gradient-to-b from-[#f2f2f2] from-50% via-[#dddddd] via-50% to-[#cfcfcf] pr-1">
              <select id="ftype" className="min-w-0 flex-1 appearance-none bg-transparent pl-[3px] outline-none">
                <option>Веб-страница полностью</option>
              </select>
              <Down />
            </span>
          </div>
          <div className="mt-[22px] flex items-center pr-[13px]">
            <button type="button" className="flex items-center gap-1 pt-1">
              <svg width="17" height="17" viewBox="0 0 17 17"><circle cx="8.500" cy="8.500" r="7.800" fill="#e4eaf2" stroke="#8fa0b8" /><path d="M4.500 10h8L8.500 6z" fill="#1e395b" /><path d="M3 5a7 7 0 0 1 11 0" stroke="#fff" strokeWidth="1.500" fill="none" /></svg>
              Скрыть папки
            </button>
            <span className="flex-1" />
            <button type="button" className={`${winButton} w-24`}>Сохранить</button>
            <button type="button" className={`${winButton} ml-[14px] w-[86px]`}>Отмена</button>
          </div>
          <svg className="-mr-1 mt-auto self-end" width="12" height="12" viewBox="0 0 12 12"><path d="M8 1h2v2H8zM5 4h2v2H5zM8 4h2v2H8zM2 7h2v2H2zM5 7h2v2H5zM8 7h2v2H8z" fill="#c3c3c3" /></svg>
        </div>
      </div>
    </section>
  );
}

const Markers = () => (
  <svg className="pointer-events-none absolute left-0 top-0 mix-blend-multiply" width="1253" height="748" viewBox="0 0 1253 748" fill="#ffff00">
    <path d="M305 6l15-4 28-1 4-1 20 1 28 2 36 1v1h10v16h-16v2l-28 3-57-1v-4l-40 1z" />
    <path d="M440 254l7-2 25-2 48-3h35v17h-20v10l-28 1-45-1-21-3z" />
    <path d="M468 578l15-2 37 2 22 4 13 2v16h-12l-1 4-35 2-23-2-14-3z" />
  </svg>
);

export default function App() {
  return (
    <div className={`${ARIAL} relative flex h-screen flex-col overflow-hidden bg-[#fafafa]`}>
      <BrowserChrome />
      <SiteHeader />
      <TaskList />
      <SaveDialog />
      <Markers />
    </div>
  );
}
